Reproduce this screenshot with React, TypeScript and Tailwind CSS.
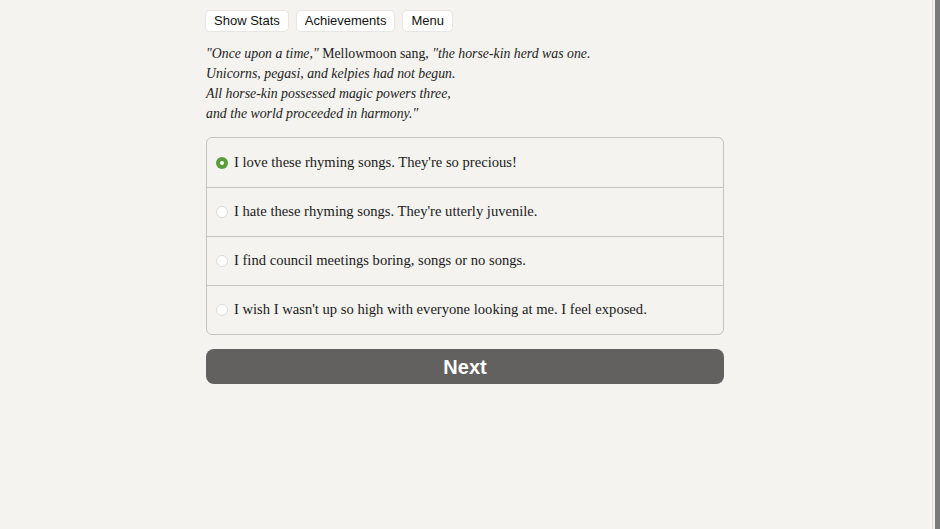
import React, { useState } from "react";

const options = [
  "I love these rhyming songs. They're so precious!",
  "I hate these rhyming songs. They're utterly juvenile.",
  "I find council meetings boring, songs or no songs.",
  "I wish I wasn't up so high with everyone looking at me. I feel exposed.",
];

export default function App() {
  const [picked, setPicked] = useState(0);

  return (
    <div className="flex h-[529px] w-full overflow-hidden bg-[#f4f3ef]">
      <div className="flex flex-1 justify-center">
        <div className="ml-[1px] w-[518px] pt-[11px]">
          <div className="flex gap-[9px] font-['Liberation_Sans',Arial,sans-serif] text-[13px] text-[#111]">
            <button className="h-[20px] rounded-[4px] bg-white px-[8px] shadow-[0_0_1px_1px_rgba(0,0,0,0.06)]">Show Stats</button>
            <button className="h-[20px] rounded-[4px] bg-white px-[8px] shadow-[0_0_1px_1px_rgba(0,0,0,0.06)]">Achievements</button>
            <button className="h-[20px] rounded-[4px] bg-white px-[8px] shadow-[0_0_1px_1px_rgba(0,0,0,0.06)]">Menu</button>
          </div>

          <p className="mt-[13px] font-['Liberation_Serif',serif] text-[13.8px] leading-[20px] text-[#222]">
            <i>"Once upon a time,"</i> Mellowmoon sang, <i>"the horse-kin herd was one.</i>
            <br />
            <i>Unicorns, pegasi, and kelpies had not begun.</i>
            <br />
            <i>All horse-kin possessed magic powers three,</i>
            <br />
            <i>and the world proceeded in harmony."</i>
          </p>

          <div className="mt-[13px] overflow-hidden rounded-[6px] border border-[#c4c3c0]">
            {options.map((text, i) => (
              <label
                key={i}
                onClick={() => setPicked(i)}
                className={`flex h-[49px] cursor-pointer items-center gap-[6px] pl-[9px] font-['Liberation_Serif',serif] text-[14.6px] text-[#1a1a1a] ${i > 0 ? "border-t border-[#c4c3c0]" : ""}`}
              >
                {picked === i ? (
                  <span className="flex h-[12px] w-[12px] items-center justify-center rounded-full bg-[#5a9e3a]">
                    <span className="h-[4px] w-[4px] rounded-full bg-white" />
                  </span>
                ) : (
                  <span className="h-[12px] w-[12px] rounded-full border border-[#dcdbd8] bg-white" />
                )}
                {text}
              </label>
            ))}
          </div>

          <button className="mt-[14px] h-[35px] w-full rounded-[8px] bg-[#626160] font-['Liberation_Sans',Arial,sans-serif] text-[20px] font-bold text-white">
            Next
          </button>
        </div>
      </div>
      <div className="flex h-full w-[11px]">
        <div className="w-[3px] bg-[#f7f6f3]" />
        <div className="w-[1px] bg-[#dcdbd8]" />
        <div className="w-[2px] bg-[#f4f3ef]" />
        <div className="w-[5px] bg-[#7c7b7c]" />
      </div>
    </div>
  );
}
